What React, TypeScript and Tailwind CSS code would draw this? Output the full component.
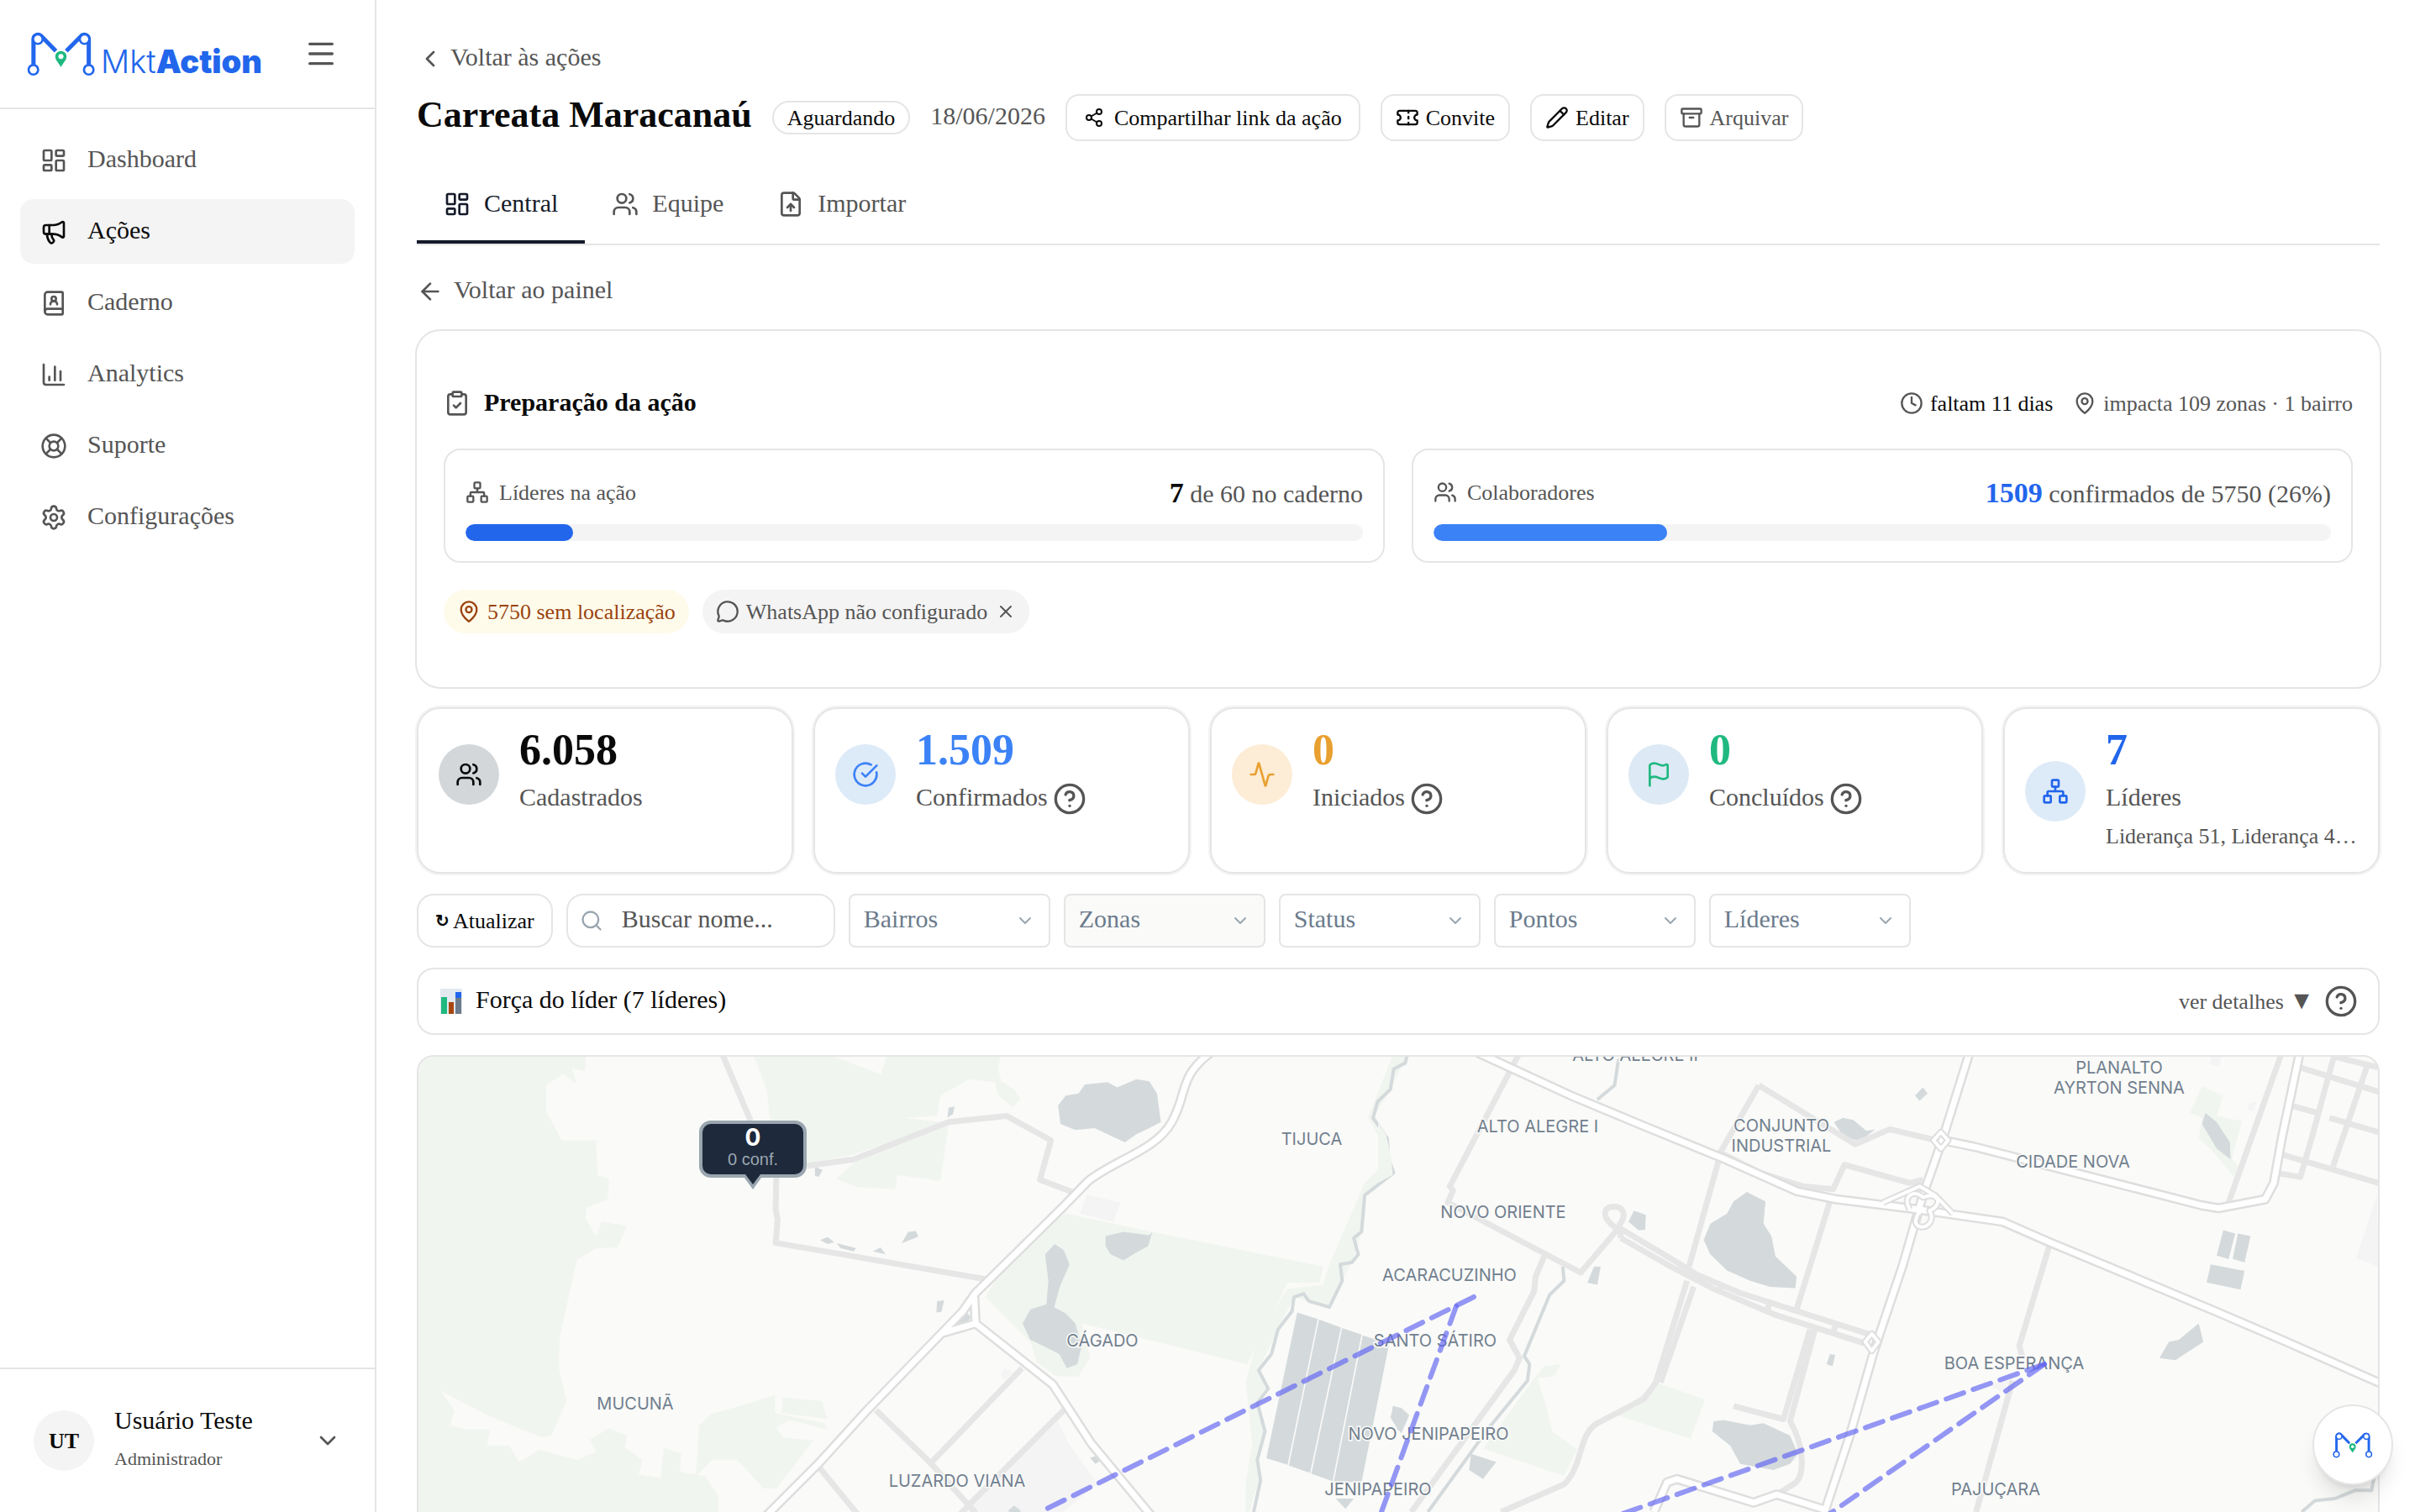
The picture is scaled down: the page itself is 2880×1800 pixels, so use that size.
import { useState } from "react";
import type { ReactNode } from "react";
import {
  Activity,
  Archive,
  ArrowLeft,
  BookUser,
  ChevronDown,
  ChevronLeft,
  CircleCheckBig,
  CircleQuestionMark,
  ClipboardCheck,
  Clock,
  FileUp,
  Flag,
  LayoutDashboard,
  LifeBuoy,
  MapPin,
  Megaphone,
  Menu,
  MessageCircle,
  Network,
  Pencil,
  Search,
  Settings,
  Share2,
  Ticket,
  Users,
  X,
} from "lucide-react";
import type { LucideIcon } from "lucide-react";

function BarsIcon({ className }: { className?: string }) {
  return (
    <svg
      viewBox="0 0 24 24"
      fill="none"
      stroke="currentColor"
      strokeWidth="2"
      strokeLinecap="round"
      strokeLinejoin="round"
      className={className}
    >
      <path d="M3 3v16a2 2 0 0 0 2 2h16" />
      <path d="M8 17v-3" />
      <path d="M13 17V5" />
      <path d="M18 17V9" />
    </svg>
  );
}

const NAV = [
  { label: "Dashboard", icon: LayoutDashboard },
  { label: "Ações", icon: Megaphone, active: true },
  { label: "Caderno", icon: BookUser },
  { label: "Analytics", icon: BarsIcon },
  { label: "Suporte", icon: LifeBuoy },
  { label: "Configurações", icon: Settings },
];

const TABS = [
  { label: "Central", icon: LayoutDashboard },
  { label: "Equipe", icon: Users },
  { label: "Importar", icon: FileUp },
];

const FILTERS = ["Bairros", "Zonas", "Status", "Pontos", "Líderes"];

interface Stat {
  value: string;
  label: string;
  icon: LucideIcon;
  valueClass: string;
  iconClass: string;
  help?: boolean;
  detail?: string;
}

const STATS: Stat[] = [
  {
    value: "6.058",
    label: "Cadastrados",
    icon: Users,
    valueClass: "text-neutral-950",
    iconClass: "bg-[#d3d7da] text-neutral-950",
  },
  {
    value: "1.509",
    label: "Confirmados",
    icon: CircleCheckBig,
    valueClass: "text-[#3b82f6]",
    iconClass: "bg-[#ddeaf8] text-[#3b82f6]",
    help: true,
  },
  {
    value: "0",
    label: "Iniciados",
    icon: Activity,
    valueClass: "text-[#e8a030]",
    iconClass: "bg-[#fdecd6] text-[#e8a030]",
    help: true,
  },
  {
    value: "0",
    label: "Concluídos",
    icon: Flag,
    valueClass: "text-[#1fb980]",
    iconClass: "bg-[#dde9f4] text-[#1fb980]",
    help: true,
  },
  {
    value: "7",
    label: "Líderes",
    icon: Network,
    valueClass: "text-[#2266ec]",
    iconClass: "bg-[#ddeaf8] text-[#2266ec]",
    detail: "Liderança 51, Liderança 4…",
  },
];

function LogoMark({ className }: { className?: string }) {
  return (
    <svg viewBox="97 113 245 157" className={className} aria-hidden="true">
      <g fill="none" stroke="#2266ec" strokeWidth="15">
        <path d="M120.500 228V138A16 16 0 0 1 147 126L200 180" />
        <path d="M317 228V138A16 16 0 0 0 291 126L237 180" />
      </g>
      <g fill="#fff" stroke="#2266ec" strokeWidth="8">
        <circle cx="136" cy="138" r="17" />
        <circle cx="302" cy="138" r="17" />
        <circle cx="120" cy="247" r="17" />
        <circle cx="317" cy="247" r="17" />
      </g>
      <path
        d="M218 238C210 222 198 214 198 200a20 20 0 0 1 40 0C238 214 226 222 218 238Z"
        fill="#1fb980"
      />
      <circle cx="218" cy="200" r="9" fill="#fff" />
    </svg>
  );
}

function Sidebar() {
  return (
    <aside className="flex w-[448px] shrink-0 flex-col border-r-2 border-[#e5e5e5]">
      <div className="flex h-[130px] shrink-0 items-center justify-between border-b-2 border-[#e5e5e5] pr-11 pl-8">
        <a href="#" className="flex items-end text-[38px] leading-9 text-[#2266ec]">
          <LogoMark className="h-[53px] w-[82px]" />
          <span className="pl-1.5 font-['Inter']">
            <span className="font-light">Mkt</span>
            <span className="font-black">Action</span>
          </span>
        </a>
        <button type="button" aria-label="Menu" className="text-[#555]">
          <Menu className="h-10 w-10" />
        </button>
      </div>

      <nav className="flex flex-1 flex-col gap-2 px-6 pt-[22px]">
        {NAV.map(({ label, icon: Icon, active }) => (
          <a
            key={label}
            href="#"
            className={`flex h-[77px] items-center gap-6 rounded-2xl px-6 ${
              active ? "bg-[#f4f4f4] text-neutral-950" : "text-[#555]"
            }`}
          >
            <Icon className="h-8 w-8" />
            <span className="pb-1">{label}</span>
          </a>
        ))}
      </nav>

      <button
        type="button"
        className="flex h-[172px] items-center gap-6 border-t-2 border-[#e5e5e5] px-10 text-left"
      >
        <span className="flex h-[72px] w-[72px] items-center justify-center rounded-full bg-[#f4f4f4] text-[26px] font-bold">
          UT
        </span>
        <span className="flex-1 pb-1">
          <span className="block leading-[48px]">Usuário Teste</span>
          <span className="block text-[22px] leading-[44px] text-[#555]">Administrador</span>
        </span>
        <ChevronDown className="h-8 w-8 text-[#555]" />
      </button>
    </aside>
  );
}

function HeaderButton({
  icon: Icon,
  children,
  muted,
}: {
  icon: LucideIcon;
  children: ReactNode;
  muted?: boolean;
}) {
  return (
    <button
      type="button"
      className={`flex h-14 items-center gap-2 rounded-2xl border-2 border-[#e5e5e5] px-4 text-[26px] ${
        muted ? "text-[#555]" : "text-neutral-950"
      }`}
    >
      <Icon className="h-7 w-7" />
      {children}
    </button>
  );
}

function ProgressCard({
  icon: Icon,
  label,
  value,
  valueClass,
  rest,
  percent,
  barClass,
}: {
  icon: LucideIcon;
  label: string;
  value: string;
  valueClass: string;
  rest: string;
  percent: number;
  barClass: string;
}) {
  return (
    <div className="rounded-[20px] border-2 border-[#e5e5e5] p-6 text-[#555]">
      <div className="flex h-[52px] items-center justify-between">
        <span className="flex items-center gap-3 text-[26px]">
          <Icon className="h-7 w-7" />
          {label}
        </span>
        <span>
          <strong className={`text-[34px] ${valueClass}`}>{value}</strong> {rest}
        </span>
      </div>
      <div className="mt-3 h-5 overflow-hidden rounded-full bg-[#f4f4f4]">
        <div className={`h-full rounded-full ${barClass}`} style={{ width: `${percent}%` }} />
      </div>
    </div>
  );
}

function StatCard({ stat }: { stat: Stat }) {
  const Icon = stat.icon;
  return (
    <div className="h-[198px] rounded-[28px] border-2 border-[#e5e5e5] p-6 shadow-[0_0_0_2px_#f3f3f3]">
      <div className="flex items-center gap-6">
        <span
          className={`flex h-[72px] w-[72px] shrink-0 items-center justify-center rounded-full ${stat.iconClass}`}
        >
          <Icon className="h-8 w-8" />
        </span>
        <div className="min-w-0">
          <div className={`text-[52px] leading-[50px] font-bold ${stat.valueClass}`}>
            {stat.value}
          </div>
          <div className="flex h-[58px] items-center gap-1.5 pt-2 text-[#555]">
            <span className="pb-1.5">{stat.label}</span>
            {stat.help && (
              <button type="button" aria-label={`Ajuda: ${stat.label}`}>
                <CircleQuestionMark className="h-10 w-10" />
              </button>
            )}
          </div>
          {stat.detail && (
            <div className="truncate text-[26px] leading-10 text-[#555]">{stat.detail}</div>
          )}
        </div>
      </div>
    </div>
  );
}

interface Tile {
  transform: string;
  parks: string[];
  urban: string[];
  water: string[];
  streams: string[];
  minor: string[];
  major: string[];
}

const WEST: Tile = {
  transform: "translate(480 1040) scale(0.7653 0.4847)",
  parks: [
    "M22 440H285L282 485L262 478L270 518L248 492L222 520V585L240 635L246 655L300 655L302 740L320 750L318 800L285 820L283 845L300 892L308 855L348 865L333 918L300 920L270 948L243 1140L242 1215L254 1295L230 1380L215 1385L130 1330L58 1270L80 1320L72 1355L95 1365L135 1365L130 1405L165 1405L180 1445L212 1415L270 1440L300 1420L290 1390L320 1362L348 1380L345 1410L372 1440L366 1475L400 1485L405 1410L432 1425L430 1470L470 1480L490 1530V1600H22Z",
    "M543 440H655L743 493L752 440H930L925 480L930 510L950 530L960 552L948 574L925 545L920 512L880 505L835 545L830 595L780 600L848 612L700 690L625 715L600 640L570 600L565 530Z",
    "M848 618L835 755L768 740L765 775L705 770L673 750L710 697Z",
    "M1030 835L1165 880L1430 965L1425 1005L1375 1005L1312 1205L1055 1105L1068 1190L1050 1235L1015 1235L985 1200L975 1150L905 1040L960 900Z",
    "M1540 440L1510 560L1500 600L1530 680L1520 720L1495 760L1440 960L1430 1010L1375 1020L1330 1130L1310 1250L1320 1400L1310 1500V1600L1330 1490L1328 1440L1340 1370L1328 1300L1345 1265L1330 1220L1360 1120L1385 1040L1440 1065L1460 1000L1475 955L1490 880L1495 790L1540 735L1508 600L1535 530L1562 440Z",
    "M590 1287L650 1295L660 1340L588 1325Z",
    "M578 1280L540 1300L478 1328L460 1355L455 1480L480 1440L520 1440L560 1510L580 1510L638 1392L590 1385L580 1360L600 1342L660 1366L655 1350L578 1325Z",
  ],
  urban: [
    "M1018 1345L1035 1400L1080 1500L1000 1600H870L880 1550Z",
    "M1063 788L1115 808L1104 855L1052 835Z",
    "M935 1215L948 1225L935 1242L928 1232Z",
  ],
  water: [
    "M1018 570L1030 545L1050 540L1060 518L1095 512L1110 525L1140 505L1160 510L1172 540L1178 610L1160 625L1140 640L1122 660L1095 640L1075 625L1045 630L1022 615Z",
    "M848 575L857 572L855 590L846 600Z",
    "M640 720L652 728L646 745L640 742Z",
    "M648 900L660 893L670 905L660 910Z",
    "M674 908L704 920L700 928L680 920Z",
    "M730 928L742 918L750 935Z",
    "M775 908L785 880L797 878L801 892Z",
    "M830 1050L841 1048L837 1076L829 1078Z",
    "M862 1092L874 1075L883 1090L872 1110L862 1108Z",
    "M1092 890L1120 880L1160 888L1165 880L1158 915L1135 935L1120 950L1100 935L1092 915Z",
    "M1013 910L1027 925L1036 960L1022 1010L1012 1065L1030 1080L1045 1105L1055 1160L1048 1205L1032 1215L1020 1180L995 1160L975 1145L963 1105L975 1070L1000 1058L1003 1000L998 935Z",
    "M1068 1435L1078 1430L1086 1440L1076 1450Z",
    "M940 1565L950 1552L960 1565L955 1580Z",
    "M1390 1078L1422 1094L1375 1452L1342 1436Z",
    "M1424 1095L1458 1115L1410 1472L1377 1454Z",
    "M1460 1116L1490 1132L1445 1492L1412 1474Z",
    "M1492 1134L1533 1155L1490 1495L1447 1493Z",
    "M1540 1308L1552 1315L1560 1345L1548 1370L1535 1335Z",
    "M1450 1535L1478 1535L1465 1560Z",
  ],
  streams: [
    "M1562 440L1558 465L1540 480L1535 530L1515 560L1508 600L1530 650L1532 700L1540 735L1495 790L1490 880L1478 895L1485 935L1475 955L1457 960L1460 1000L1440 1065L1408 1050L1400 1032L1385 1040L1382 1075L1360 1120L1350 1180L1330 1220L1345 1265L1328 1300L1340 1370L1328 1440L1333 1490L1318 1600",
  ],
  minor: [
    "M495 440L540 607",
    "M628 718L700 702L848 610L938 595L1007 655L990 752L1040 782",
    "M580 745L579 825L582 850L579 907L908 997",
    "M735 1318L820 1448L890 1570",
    "M962 1215L820 1448",
    "M1027 1318L880 1550L850 1600",
    "M645 1455L720 1600",
  ],
  major: [
    "M1255 440C1205 500 1220 540 1195 610C1170 680 1110 700 1065 755L1025 820L890 1030L870 1075L720 1320L645 1450L550 1600",
    "M888 1040L890 1105L1010 1255L1070 1400L1175 1600",
    "M890 1105L835 1130",
  ],
};

const EAST: Tile = {
  transform: "translate(1640 1040) scale(0.7908 0.4847)",
  parks: [
    "M0 612L12 640L20 700L22 740L0 760Z",
    "M1240 522L1272 545L1262 595L1300 608L1285 700L1295 720L1288 745L1255 680L1235 650L1240 600L1222 588Z",
    "M422 1252L492 1292L470 1388L355 1328Z",
    "M230 1250L250 1210L275 1205L265 1235L240 1240L250 1290L262 1370L300 1415L280 1480L158 1412Z",
  ],
  urban: [
    "M1503 790L1506 965L1472 945Z",
    "M920 1255L950 1245L940 1275Z",
    "M1255 440L1272 440L1265 475L1252 468Z",
    "M1310 565L1322 560L1318 582L1308 582Z",
  ],
  water: [
    "M686 610L700 600L715 605L735 632L748 628L735 645L720 655L700 645Z",
    "M808 545L820 525L827 540L815 558Z",
    "M555 782L583 805L580 860L592 890L598 940L630 990L628 1018L590 1015L560 1000L525 975L500 935L490 900L500 860L525 835L535 805Z",
    "M385 828L403 838L402 875L392 876L377 855Z",
    "M325 965L335 965L330 1010L315 1005Z",
    "M1245 588L1262 610L1282 660L1283 702L1262 675L1240 615Z",
    "M1272 876L1290 884L1280 947L1262 938Z",
    "M1294 884L1313 890L1304 955L1286 946Z",
    "M1253 960L1304 976L1298 1022L1247 1004Z",
    "M1235 1105L1242 1150L1200 1195L1176 1190L1190 1150L1205 1145Z",
    "M680 1180L688 1182L684 1210L675 1205Z",
    "M505 1345L520 1342L560 1355L580 1350L620 1380L632 1425L620 1450L595 1465L545 1450L530 1405L503 1370Z",
    "M140 1425L178 1445L158 1487L137 1465Z",
    "M22 1308L35 1312L47 1330L35 1375L20 1340Z",
  ],
  streams: [
    "M362 455L356 520L330 555",
    "M278 965L280 1000L258 1035L220 1185L228 1205L225 1245L165 1365L75 1568",
    "M1500 1475L1495 1515L1470 1515L1440 1535L1410 1540L1390 1568",
  ],
  minor: [
    "M213 440L108 768L113 778L105 808L305 980L365 865",
    "M365 880L350 860C335 835 342 818 355 818C370 818 375 840 362 865",
    "M250 940L237 990L235 1025L198 1145L213 1190L205 1220L50 1568",
    "M365 895L435 960L505 1020L600 1085L735 1155",
    "M365 872L440 945L480 985L545 1030L740 1132",
    "M365 872L365 895",
    "M520 1010L510 1025",
    "M590 1052L585 1075",
    "M690 1105L685 1125",
    "M515 690L468 965",
    "M573 520L515 685L575 735L640 768L685 775L702 715L800 760L820 752",
    "M573 520L718 665L770 628L840 655",
    "M680 805L630 1070",
    "M465 1000L418 1250L400 1290L330 1350C300 1380 310 1450 280 1500L185 1568",
    "M475 1015L425 1250",
    "M650 1120L610 1340L535 1308",
    "M657 1122L620 1345C640 1400 645 1480 625 1500L600 1525",
    "M1010 915L965 1160L970 1190",
    "M955 1245L900 1568",
    "M1360 440L1280 808",
    "M1440 440L1405 650L1388 745L1350 735",
    "M1490 465L1437 720",
    "M1385 475L1510 538",
    "M1440 450L1510 478",
    "M1375 570L1418 590",
    "M1432 600L1510 637",
    "M1360 690L1510 762",
  ],
  major: [
    "M150 440L290 545L400 620L520 700L630 780L690 800L800 822L940 855L1010 905L1150 1000L1260 1075L1360 1145L1510 1253",
    "M890 440L850 650L820 790L790 960L755 1130L745 1180L710 1380L672 1568",
    "M850 655L900 672L1240 815L1265 822L1335 800L1348 760L1360 650L1387 440",
    "M672 1562L600 1525L565 1545L450 1487L435 1495L415 1568",
  ],
};

// ramps and roundabouts, drawn thinner than the highways
const RAMPS = [
  "M760 808L815 768L838 790L865 835",
  "M800 825C788 790 808 775 820 795C845 780 850 815 830 828C838 850 828 868 818 868C806 865 808 850 813 835",
  "M847 635L858 655L847 676L836 655Z",
  "M743 1130L753 1150L743 1172L733 1150Z",
];

const LABELS: [string, number, number][] = [
  ["TIJUCA", 1561, 1363],
  ["ALTO ALEGRE II", 1946, 1263],
  ["ALTO ALEGRE I", 1830, 1348],
  ["CONJUNTO", 2120, 1347],
  ["INDUSTRIAL", 2120, 1371],
  ["PLANALTO", 2522, 1278],
  ["AYRTON SENNA", 2522, 1302],
  ["CIDADE NOVA", 2467, 1390],
  ["NOVO ORIENTE", 1789, 1450],
  ["ACARACUZINHO", 1725, 1525],
  ["CÁGADO", 1312, 1603],
  ["SANTO SÁTIRO", 1708, 1603],
  ["MUCUNÃ", 756, 1678],
  ["BOA ESPERANÇA", 2397, 1630],
  ["NOVO JENIPAPEIRO", 1700, 1714],
  ["LUZARDO VIANA", 1139, 1770],
  ["JENIPAPEIRO", 1640, 1780],
  ["PAJUÇARA", 2375, 1780],
];

const ROUTES = [
  "M1754 1544L1238 1800",
  "M1733 1555L1644 1800",
  "M2433 1624L1920 1806",
  "M2433 1624L2172 1806",
];

function Lines({ paths, stroke, width }: { paths: string[]; stroke: string; width: number }) {
  return (
    <g fill="none" stroke={stroke} strokeWidth={width} strokeLinejoin="round">
      {paths.map((d) => (
        <path key={d} d={d} vectorEffect="non-scaling-stroke" />
      ))}
    </g>
  );
}

function Areas({ paths, fill }: { paths: string[]; fill: string }) {
  return (
    <g fill={fill}>
      {paths.map((d) => (
        <path key={d} d={d} />
      ))}
    </g>
  );
}

function MapTile({ tile }: { tile: Tile }) {
  return (
    <g transform={tile.transform}>
      <Areas paths={tile.parks} fill="#f1f5f0" />
      <Areas paths={tile.urban} fill="#f4f4f5" />
      <Areas paths={tile.water} fill="#d4dadc" />
      <Lines paths={tile.streams} stroke="#d4dadc" width={4} />
      <Lines paths={tile.minor} stroke="#e6e6e6" width={7} />
      <Lines paths={tile.major} stroke="#dedede" width={12} />
      <Lines paths={tile.major} stroke="#ffffff" width={7} />
    </g>
  );
}

function ActionMap() {
  return (
    <div className="relative h-[700px] shrink-0 overflow-hidden rounded-[20px] border-2 border-[#e5e5e5] bg-[#fafaf8]">
      <svg
        viewBox="498 1258 2332 696"
        preserveAspectRatio="xMidYMin slice"
        className="h-full w-full"
      >
        <MapTile tile={WEST} />
        <MapTile tile={EAST} />
        <g transform={EAST.transform}>
          <Lines paths={RAMPS} stroke="#dedede" width={8} />
          <Lines paths={RAMPS} stroke="#ffffff" width={4} />
        </g>
        <g
          fill="#71808f"
          stroke="#fafaf8"
          strokeWidth="3"
          paintOrder="stroke"
          textAnchor="middle"
          className="font-['Inter'] text-[20px]"
        >
          {LABELS.map(([name, x, y]) => (
            <text key={name} x={x} y={y}>
              {name}
            </text>
          ))}
        </g>
        <g
          fill="none"
          stroke="#6366f1"
          strokeOpacity="0.68"
          strokeWidth="6"
          strokeLinecap="round"
          strokeDasharray="22 12"
        >
          {ROUTES.map((d) => (
            <path key={d} d={d} />
          ))}
        </g>
      </svg>

      {/* Zone marker */}
      <div className="absolute top-[76px] left-[334px] flex flex-col items-center">
        <div className="h-[68px] w-32 rounded-[14px] border-4 border-[#9aa6b0] bg-[#1e293b] pt-0.5 text-center">
          <div className="font-['Inter'] text-[28px] leading-7 font-bold text-white">0</div>
          <div className="font-['Liberation_Sans'] text-[20px] leading-6 text-[#9aa6b0]">
            0 conf.
          </div>
        </div>
        <svg viewBox="0 0 28 18" className="-mt-1 h-[18px] w-7">
          <path d="M1 0L14 18L27 0Z" fill="#9aa6b0" />
          <path d="M5 0L14 12L23 0Z" fill="#1e293b" />
        </svg>
      </div>
    </div>
  );
}

export default function App() {
  const [tab, setTab] = useState("Central");

  return (
    <div className="flex h-screen overflow-hidden bg-white font-['Liberation_Serif',serif] text-[30px] leading-normal text-neutral-950">
      <Sidebar />

      <main className="flex min-w-0 flex-1 flex-col overflow-hidden px-12 pt-12">
        {/* Header */}
        <a href="#" className="flex h-11 items-center gap-2 self-start text-[#555]">
          <ChevronLeft className="h-8 w-8" />
          <span className="pb-1.5">Voltar às ações</span>
        </a>
        <div className="mt-5 flex h-14 shrink-0 items-center gap-6">
          <h1 className="pb-1.5 text-[44px] font-bold">Carreata Maracanaú</h1>
          <span className="flex h-10 items-center rounded-full border-2 border-[#e5e5e5] px-4 text-[26px]">
            Aguardando
          </span>
          <span className="pb-1.5 text-[#555]">18/06/2026</span>
          <button
            type="button"
            className="flex h-14 items-center gap-3 rounded-2xl border-2 border-[#e5e5e5] px-5 text-[26px]"
          >
            <Share2 className="h-6 w-6" />
            Compartilhar link da ação
          </button>
          <HeaderButton icon={Ticket}>Convite</HeaderButton>
          <HeaderButton icon={Pencil}>Editar</HeaderButton>
          <HeaderButton icon={Archive} muted>
            Arquivar
          </HeaderButton>
        </div>

        {/* Tabs */}
        <nav className="mt-8 flex shrink-0 border-b-2 border-[#e5e5e5]">
          {TABS.map(({ label, icon: Icon }) => (
            <button
              key={label}
              type="button"
              onClick={() => setTab(label)}
              className={`flex h-[90px] items-center gap-4 border-b-4 px-8 ${
                tab === label
                  ? "border-[#161b2b] text-[#161b2b]"
                  : "border-transparent text-[#555]"
              }`}
            >
              <Icon className="h-8 w-8" />
              <span className="pb-1">{label}</span>
            </button>
          ))}
        </nav>

        <button
          type="button"
          className="mt-8 flex h-[46px] items-center gap-3 self-start text-[#555]"
        >
          <ArrowLeft className="h-8 w-8" />
          <span className="pb-1.5">Voltar ao painel</span>
        </button>

        <div className="mt-6 flex flex-col gap-6">
          {/* Preparação */}
          <section className="flex flex-col gap-8 rounded-[28px] px-8 py-16 ring-2 ring-[#e5e5e5]">
            <div className="flex h-11 items-center justify-between">
              <h2 className="flex items-center gap-4 font-bold">
                <ClipboardCheck className="h-8 w-8 text-[#555]" />
                <span className="pb-1">Preparação da ação</span>
              </h2>
              <div className="flex gap-6 text-[26px] text-[#555]">
                <span className="flex items-center gap-2">
                  <Clock className="h-7 w-7" />
                  <span className="text-neutral-950">faltam 11 dias</span>
                </span>
                <span className="flex items-center gap-2">
                  <MapPin className="h-7 w-7" />
                  impacta 109 zonas · 1 bairro
                </span>
              </div>
            </div>

            <div className="grid grid-cols-2 gap-8">
              <ProgressCard
                icon={Network}
                label="Líderes na ação"
                value="7"
                valueClass="text-neutral-950"
                rest="de 60 no caderno"
                percent={12}
                barClass="bg-[#2266ec]"
              />
              <ProgressCard
                icon={Users}
                label="Colaboradores"
                value="1509"
                valueClass="text-[#2266ec]"
                rest="confirmados de 5750 (26%)"
                percent={26}
                barClass="bg-[#3b82f6]"
              />
            </div>

            <div className="flex gap-4 text-[26px]">
              <button
                type="button"
                className="flex h-[52px] items-center gap-2 rounded-full bg-[#fffbeb] px-4 text-[#9a430f]"
              >
                <MapPin className="h-7 w-7" />
                5750 sem localização
              </button>
              <span className="flex h-[52px] items-center gap-2 rounded-full bg-[#f4f4f4] px-4 text-[#555]">
                <MessageCircle className="h-7 w-7" />
                WhatsApp não configurado
                <button type="button" aria-label="Dispensar" className="pl-0.5">
                  <X className="h-6 w-6" />
                </button>
              </span>
            </div>
          </section>

          {/* Indicadores */}
          <section className="grid grid-cols-5 gap-6">
            {STATS.map((stat) => (
              <StatCard key={stat.label} stat={stat} />
            ))}
          </section>

          {/* Filtros */}
          <div className="flex gap-4">
            <button
              type="button"
              className="flex h-16 items-center gap-1 rounded-[20px] border-2 border-[#e5e5e5] px-5 text-[26px]"
            >
              <span className="text-xl font-bold">↻</span>
              Atualizar
            </button>
            <label className="flex h-16 w-80 items-center gap-[22px] rounded-[20px] border-2 border-[#e5e5e5] px-[14px]">
              <Search className="h-7 w-7 shrink-0 text-[#9aa6b0]" />
              <input
                type="text"
                aria-label="Buscar nome"
                placeholder="Buscar nome..."
                className="w-full min-w-0 pb-1.5 outline-none placeholder:text-[#555]"
              />
            </label>
            {FILTERS.map((name) => (
              <div key={name} className="relative w-60">
                <select
                  aria-label={name}
                  className={`h-16 w-full appearance-none rounded-lg border-2 border-[#e5e5e5] px-4 pb-1.5 text-[#6b7b8c] ${
                    name === "Zonas" ? "bg-[#fafaf9]" : "bg-white"
                  }`}
                >
                  <option>{name}</option>
                </select>
                <ChevronDown className="pointer-events-none absolute top-5 right-[18px] h-6 w-6 text-[#9aa6b0]" />
              </div>
            ))}
          </div>

          {/* Força do líder */}
          <section className="flex h-20 items-center justify-between rounded-[20px] border-2 border-[#e5e5e5] px-6">
            <div className="flex items-center gap-4">
              <svg viewBox="-2 0 28 30" className="h-[30px] w-7" aria-hidden="true">
                <path d="M0 0h26v30H0z" fill="#e2e9f0" />
                <path d="M1 10h7v20H1z" fill="#1fb980" />
                <path d="M10 16h6v14h-6z" fill="#a8460f" />
                <path d="M18 4h7v26h-7z" fill="#6b7b8c" />
                <path d="M18 4h7v7h-7z" fill="#2266ec" />
              </svg>
              <span className="pb-1.5">Força do líder (7 líderes)</span>
            </div>
            <div className="flex items-center gap-3 text-[26px] text-[#555]">
              <button type="button">
                ver detalhes <span className="text-[30px] leading-none">▼</span>
              </button>
              <button type="button" aria-label="Ajuda: Força do líder">
                <CircleQuestionMark className="h-10 w-10" />
              </button>
            </div>
          </section>

          <ActionMap />
        </div>
      </main>

      <button
        type="button"
        aria-label="Assistente MktAction"
        className="fixed right-8 bottom-8 flex h-24 w-24 items-center justify-center rounded-full border-2 border-[#e5e5e5] bg-white shadow-xl"
      >
        <LogoMark className="h-[31px] w-12" />
      </button>
    </div>
  );
}
